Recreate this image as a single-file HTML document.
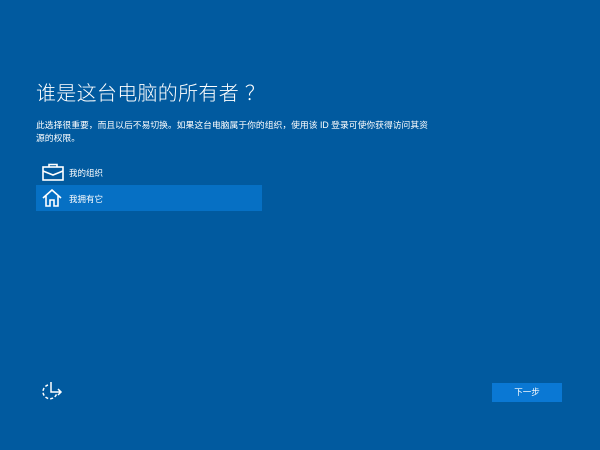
<!DOCTYPE html>
<html><head><meta charset="utf-8"><style>
body{margin:0;width:600px;height:450px;background:#015a9f;font-family:"Liberation Sans","Noto Sans CJK SC",sans-serif;color:#fff;position:relative;overflow:hidden}
.t{position:absolute;left:36px;top:77px;font-size:20px;letter-spacing:0.3px;font-weight:300}
.d{position:absolute;left:36px;top:119px;width:450px;font-size:8.8px;line-height:13px;white-space:nowrap}
.o{position:absolute;left:36px;width:226px;height:26px;font-size:8.5px}
.o span{position:absolute;left:33px;top:8px}
.o svg{position:absolute;left:6px;top:4px}
.sel{background:#0670c4}
.btn{position:absolute;left:492px;top:383px;width:70px;height:19px;background:#0a78d4;font-size:8.5px;text-align:center;line-height:19px}
</style></head><body>
<div class="t">谁是这台电脑的所有者 ？</div>
<div class="d">此选择很重要，而且以后不易切换。如果这台电脑属于你的组织，使用该 ID 登录可使你获得访问其资<br>源的权限。</div>
<div class="o" style="top:159px"><svg width="22" height="18" viewBox="0 0 22 18" fill="none" stroke="#fff" stroke-width="1.6"><rect x="1" y="4" width="20" height="13"/><path d="M7 4V1.5h8V4M1 8l10 4 10-4"/></svg><span>我的组织</span></div>
<div class="o sel" style="top:185px"><svg width="20" height="18" viewBox="0 0 20 18" fill="none" stroke="#fff" stroke-width="1.6"><path d="M1 9L10 1l9 8M4 7v10h4v-6h4v6h4V7"/></svg><span>我拥有它</span></div>
<svg style="position:absolute;left:40px;top:380px" width="24" height="22" viewBox="0 0 24 22" fill="none" stroke="#fff" stroke-width="1.5"><path d="M8 5a7 7 0 1 0 9 7" stroke-dasharray="3 2"/><path d="M11 2v10h10M18 9l3 3-3 3"/></svg>
<div class="btn">下一步</div>
</body></html>
